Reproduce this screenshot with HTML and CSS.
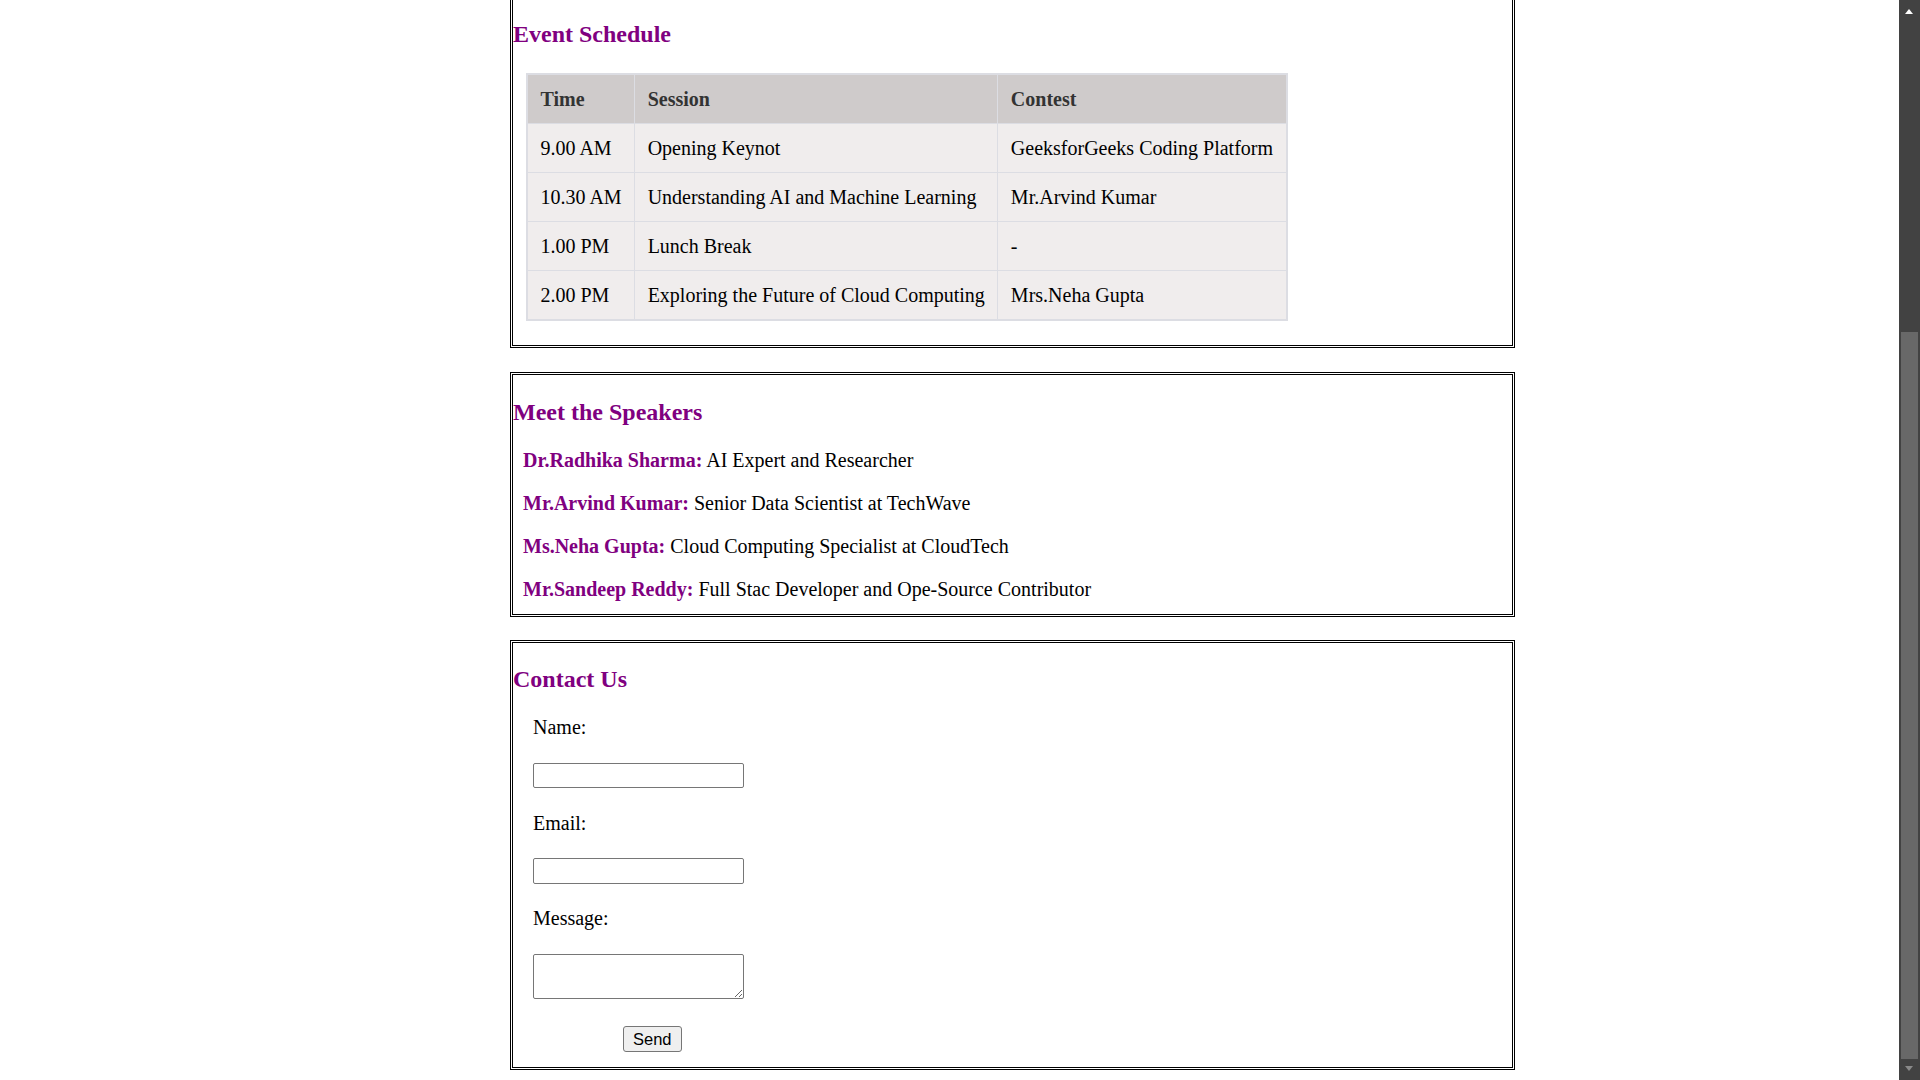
FILE: index.html
```html
<!DOCTYPE html>
<html lang="en">
<head>
<meta charset="utf-8">
<title>Tech Conference</title>
<link rel="stylesheet" href="styles.css">
</head>
<body>
<main class="page">
  <section class="card card--cut">
    <h2 class="card__title card__title--first">Event Schedule</h2>
    <table class="schedule">
      <thead>
        <tr><th>Time</th><th>Session</th><th>Contest</th></tr>
      </thead>
      <tbody>
        <tr><td>9.00 AM</td><td>Opening Keynot</td><td>GeeksforGeeks Coding Platform</td></tr>
        <tr><td>10.30 AM</td><td>Understanding AI and Machine Learning</td><td>Mr.Arvind Kumar</td></tr>
        <tr><td>1.00 PM</td><td>Lunch Break</td><td>-</td></tr>
        <tr><td>2.00 PM</td><td>Exploring the Future of Cloud Computing</td><td>Mrs.Neha Gupta</td></tr>
      </tbody>
    </table>
  </section>

  <section class="card">
    <h2 class="card__title">Meet the Speakers</h2>
    <div class="speakers">
      <p class="speaker"><strong class="speaker__name">Dr.Radhika Sharma:</strong> AI Expert and Researcher</p>
      <p class="speaker"><strong class="speaker__name">Mr.Arvind Kumar:</strong> Senior Data Scientist at TechWave</p>
      <p class="speaker"><strong class="speaker__name">Ms.Neha Gupta:</strong> Cloud Computing Specialist at CloudTech</p>
      <p class="speaker"><strong class="speaker__name">Mr.Sandeep Reddy:</strong> Full Stac Developer and Ope-Source Contributor</p>
    </div>
  </section>

  <section class="card card--contact">
    <h2 class="card__title">Contact Us</h2>
    <form class="contact">
      <label class="contact__label" for="name">Name:</label>
      <input class="contact__field" type="text" id="name">
      <label class="contact__label" for="email">Email:</label>
      <input class="contact__field" type="email" id="email">
      <label class="contact__label" for="message">Message:</label>
      <textarea class="contact__field contact__area" id="message"></textarea>
      <button class="contact__send" type="button">Send</button>
    </form>
  </section>
</main>

<div class="scrollbar" aria-hidden="true">
  <span class="scrollbar__up"></span>
  <span class="scrollbar__thumb"></span>
  <span class="scrollbar__down"></span>
</div>
</body>
</html>
```
FILE: styles.css
```css
html {
  overflow: hidden;
}

body {
  margin: 0;
  background: #ffffff;
  color: #000000;
  font-family: "Liberation Serif", "Times New Roman", serif;
  font-size: 20px;
}

.page {
  width: 1005px;
  margin-left: 510px;
  padding-bottom: 10.5px;
}

.card {
  display: flow-root;
  border: 3px double #000000;
  margin-top: 24px;
}

.card--cut {
  border-top: none;
  margin-top: 0;
}

.card--contact {
  margin-top: 23px;
}

.card__title {
  margin: 22.5px 0 0;
  color: #800080;
  font-size: 24px;
  line-height: 28px;
  font-weight: bold;
}

.card__title--first {
  margin-top: 20px;
}

/* schedule table */
.schedule {
  margin: 25px 0 24px 13px;
  border: 2px solid #dcdde3;
  border-collapse: separate;
  border-spacing: 0;
}

.schedule th,
.schedule td {
  padding: 12.5px;
  line-height: 23px;
  text-align: left;
  white-space: nowrap;
  border-right: 1px solid #dcdde3;
  border-bottom: 1px solid #dcdde3;
}

.schedule th:last-child,
.schedule td:last-child {
  border-right: none;
}

.schedule tbody tr:last-child td {
  border-bottom: none;
}

.schedule th {
  background: #cfcbcb;
  color: #333333;
  font-weight: bold;
}

.schedule td {
  background: #f0eded;
}

/* speakers */
.speakers {
  display: flex;
  flex-direction: column;
  gap: 20px;
  margin: 23px 0 13px;
  padding-left: 10px;
}

.speaker {
  margin: 0;
  line-height: 23px;
}

.speaker__name {
  color: #800080;
}

/* contact form */
.contact {
  display: flex;
  flex-direction: column;
  align-items: flex-start;
  gap: 23.5px;
  margin-top: 23px;
  padding: 0 0 14.5px 20px;
}

.contact__label {
  display: block;
  line-height: 23px;
}

.contact__field {
  box-sizing: border-box;
  width: 211px;
  height: 25.5px;
  margin: 0;
  padding: 1px 2px;
  border: 1px solid #767676;
  border-radius: 2px;
  background: #ffffff;
}

.contact__area {
  display: block;
  height: 45px;
}

.contact__send {
  box-sizing: border-box;
  height: 26px;
  margin: 4px 0 0 90px;
  padding: 0 9px;
  border: 1px solid #767676;
  border-radius: 3px;
  background: #efefef;
  color: #000000;
  font-family: "Liberation Sans", Arial, sans-serif;
  font-size: 16.5px;
}

/* overlay scrollbar as shown in the screenshot */
.scrollbar {
  position: fixed;
  top: 0;
  right: 0;
  width: 21px;
  height: 100%;
  background: #424242;
}

.scrollbar__thumb {
  position: absolute;
  left: 2px;
  top: 332px;
  width: 17px;
  height: 727px;
  background: #686868;
}

.scrollbar__up,
.scrollbar__down {
  position: absolute;
  left: 6px;
  width: 0;
  height: 0;
  border-left: 4.5px solid transparent;
  border-right: 4.5px solid transparent;
}

.scrollbar__up {
  top: 9px;
  border-bottom: 5px solid #ffffff;
}

.scrollbar__down {
  bottom: 9px;
  border-top: 5px solid #8a8a8a;
}
```
